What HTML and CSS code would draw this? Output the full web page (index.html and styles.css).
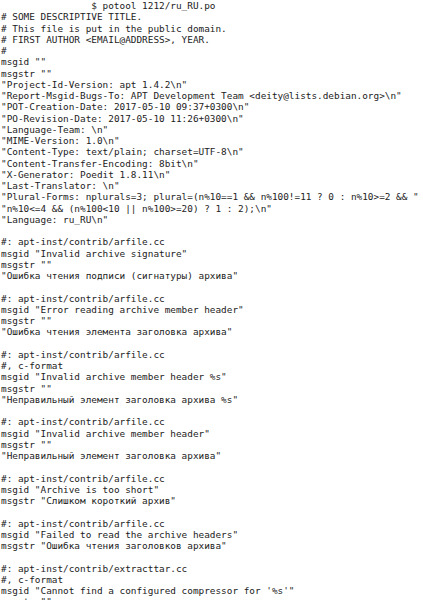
FILE: index.html
```html
<!DOCTYPE html>
<html lang="ru">
<head>
<meta charset="utf-8">
<title>potool 1212/ru_RU.po</title>
<link rel="stylesheet" href="styles.css">
</head>
<body>
<main class="terminal">
<div class="prompt">$ potool 1212/ru_RU.po</div>
<pre class="po"># SOME DESCRIPTIVE TITLE.
# This file is put in the public domain.
# FIRST AUTHOR &lt;EMAIL@ADDRESS&gt;, YEAR.
#
msgid ""
msgstr ""
"Project-Id-Version: apt 1.4.2\n"
"Report-Msgid-Bugs-To: APT Development Team &lt;deity@lists.debian.org&gt;\n"
"POT-Creation-Date: 2017-05-10 09:37+0300\n"
"PO-Revision-Date: 2017-05-10 11:26+0300\n"
"Language-Team: \n"
"MIME-Version: 1.0\n"
"Content-Type: text/plain; charset=UTF-8\n"
"Content-Transfer-Encoding: 8bit\n"
"X-Generator: Poedit 1.8.11\n"
"Last-Translator: \n"
"Plural-Forms: nplurals=3; plural=(n%10==1 &amp;&amp; n%100!=11 ? 0 : n%10&gt;=2 &amp;&amp; "
"n%10&lt;=4 &amp;&amp; (n%100&lt;10 || n%100&gt;=20) ? 1 : 2);\n"
"Language: ru_RU\n"

#: apt-inst/contrib/arfile.cc
msgid "Invalid archive signature"
msgstr ""
"Ошибка чтения подписи (сигнатуры) архива"

#: apt-inst/contrib/arfile.cc
msgid "Error reading archive member header"
msgstr ""
"Ошибка чтения элемента заголовка архива"

#: apt-inst/contrib/arfile.cc
#, c-format
msgid "Invalid archive member header %s"
msgstr ""
"Неправильный элемент заголовка архива %s"

#: apt-inst/contrib/arfile.cc
msgid "Invalid archive member header"
msgstr ""
"Неправильный элемент заголовка архива"

#: apt-inst/contrib/arfile.cc
msgid "Archive is too short"
msgstr "Слишком короткий архив"

#: apt-inst/contrib/arfile.cc
msgid "Failed to read the archive headers"
msgstr "Ошибка чтения заголовков архива"

#: apt-inst/contrib/extracttar.cc
#, c-format
msgid "Cannot find a configured compressor for '%s'"
msgstr ""</pre>
</main>
</body>
</html>
```
FILE: styles.css
```css
html, body {
  margin: 0;
  padding: 0;
  background: #ffffff;
}

.terminal {
  padding: 0 0 0 1px;
  font-family: "DejaVu Sans Mono", "Liberation Mono", monospace;
  font-size: 9.4px;
  line-height: 11.25px;
  color: #1c1c1c;
}

.prompt {
  padding-left: 16ch;
  white-space: pre;
}

.po {
  margin: 0;
  font: inherit;
  white-space: pre;
}
```
